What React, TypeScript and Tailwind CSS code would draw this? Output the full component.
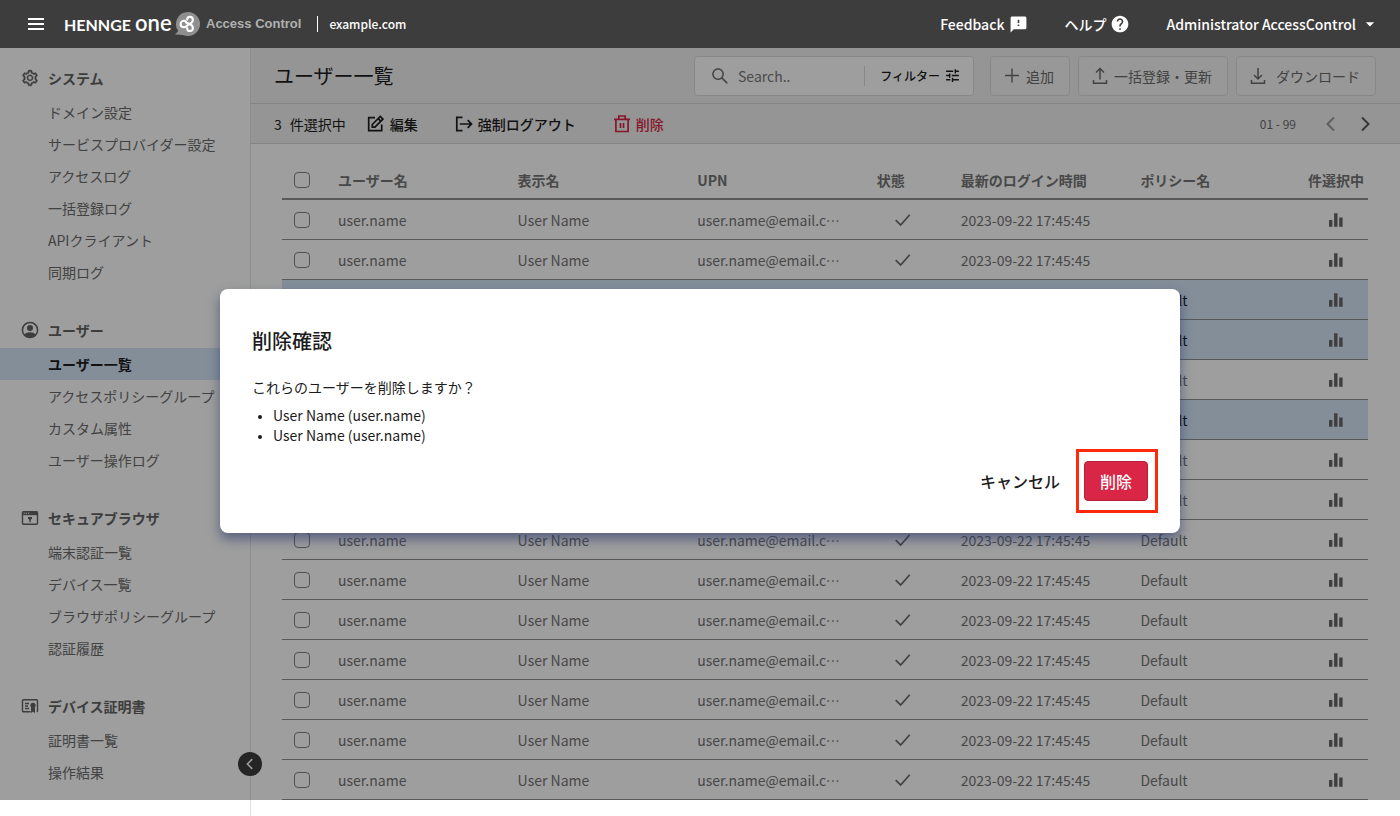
import type { ReactNode } from "react";
import { AiOutlineSearch, AiOutlineSetting } from "react-icons/ai";
import { MdArrowDropDown, MdFeedback, MdHelp, MdTune } from "react-icons/md";

interface NavSection {
  title: string;
  icon: ReactNode;
  items: string[];
}

interface UserRow {
  policy: string;
  selected: boolean;
}

function UserIcon() {
  return (
    <svg viewBox="0 0 18 18" className="h-[18px] w-[18px]" fill="none">
      <circle cx="9" cy="9" r="7.6" stroke="currentColor" strokeWidth="1.5" />
      <circle cx="9" cy="7" r="3" fill="currentColor" />
      <path d="M3.4 13.6c1.2-1.6 3.3-2.4 5.6-2.4s4.4.8 5.6 2.4C13.3 15.4 11.3 16.4 9 16.4s-4.3-1-5.6-2.800z" fill="currentColor" />
    </svg>
  );
}

function BrowserIcon() {
  return (
    <svg viewBox="0 0 18 18" className="h-[18px] w-[18px]" fill="none">
      <rect x="1.5" y="2.7" width="15" height="12.6" rx="1" stroke="currentColor" strokeWidth="1.4" />
      <path d="M1.5 2.700h15v3.500h-15z" fill="currentColor" />
      <path d="M2.600 4.300h1.200M4.800 4.300h1.200M7 4.300h1.200" stroke="#fff" strokeWidth="1.1" />
      <path d="M7 8h4v1.700l-1.300 1v2.600H8.300v-2.600L7 9.700z" fill="currentColor" />
    </svg>
  );
}

function CertificateIcon() {
  return (
    <svg viewBox="0 0 18 18" className="h-[18px] w-[18px]" fill="none">
      <path d="M9.500 14.800h-7a1 1 0 0 1-1-1V3.700a1 1 0 0 1 1-1h13a1 1 0 0 1 1 1v10.100a1 1 0 0 1-.7 1" stroke="currentColor" strokeWidth="1.4" />
      <path d="M4 6.500h4M4 9h3M4 11.500h4" stroke="currentColor" strokeWidth="1.3" />
      <circle cx="12" cy="8.3" r="2.6" fill="currentColor" />
      <path d="M10 10.300h4v5.700l-2-1.300-2 1.300z" fill="currentColor" />
    </svg>
  );
}

function ChartIcon() {
  return (
    <svg viewBox="0 0 16 16" className="mx-auto h-4 w-4" fill="currentColor">
      <path d="M1 8h3.400v6.800H1zM6.100 1.200h3.400v13.600H6.100zM11.200 5.400h3.400v9.400h-3.400z" />
    </svg>
  );
}

function CheckIcon() {
  return (
    <svg viewBox="0 0 16 16" className="mx-auto h-4 w-4" fill="none" stroke="currentColor" strokeWidth="1.7">
      <path d="M.7 8.200 5.700 13 14.700 2.800" />
    </svg>
  );
}

function PlusIcon() {
  return (
    <svg viewBox="0 0 18 18" className="h-[18px] w-[18px]" fill="none" stroke="currentColor" strokeWidth="1.4">
      <path d="M1 8.500h14M8 1.500v14" />
    </svg>
  );
}

function UploadIcon() {
  return (
    <svg viewBox="0 0 18 18" className="h-[18px] w-[18px]" fill="none" stroke="currentColor" strokeWidth="1.5">
      <path d="M8 12.500V1.800M4 5.500l4-4 4 4M1.500 13v3.300h13V13" />
    </svg>
  );
}

function DownloadIcon() {
  return (
    <svg viewBox="0 0 18 18" className="h-[18px] w-[18px]" fill="none" stroke="currentColor" strokeWidth="1.5">
      <path d="M8 1v10.800M4 8l4 4 4-4M1.500 13v3.300h13V13" />
    </svg>
  );
}

function EditIcon() {
  return (
    <svg viewBox="0 0 18 18" className="h-[18px] w-[18px]" fill="none" stroke="currentColor" strokeWidth="1.7">
      <path d="M9 2.700H2.700v13h13V9.500" />
      <path d="M6.300 12.200V9.500L14.300 1.500 16.900 4.100 8.900 12.200zM12.200 3.700l2.500 2.500" />
    </svg>
  );
}

function LogoutIcon() {
  return (
    <svg viewBox="0 0 20 18" className="h-[18px] w-5" fill="none" stroke="currentColor" strokeWidth="1.7">
      <path d="M8.500 2.300H2.800v13.400h5.700" />
      <path d="M5.800 9h11.700M13.700 5.200 17.500 9l-3.800 3.800" />
    </svg>
  );
}

function TrashIcon() {
  return (
    <svg viewBox="0 0 20 20" className="h-5 w-5" fill="none" stroke="currentColor" strokeWidth="1.7">
      <path d="M2 5.300h16M6.800 5.300V2h6.400v3.300M3.900 5.300v12.200h12.200V5.300M8.500 9v5M11.500 9v5" />
    </svg>
  );
}

function ServiceLogo() {
  return (
    <svg viewBox="0 0 25 24" className="h-6 w-[25px]" fill="none">
      <path d="M13 0a12 12 0 1 1-5 22.900L0 22.500l3.200-3.600A12 12 0 0 1 13 0z" fill="#8f8f8f" />
      <path
        d="M10.200 8.900C7.200 8.300 5.600 10 5.600 12s1.500 3.300 3.500 3.300c2.600 0 3.200-2.300 5.400-3.400M10.200 8.900c.6 1.700 2 2.700 4.300 3M12.200 7.600c0-1.800 1.200-2.700 2.700-2.700s3 1 3 2.800-1.300 3.400-3.400 4.200c2.200.7 3.400 2.100 3.400 4.100s-1.300 3-3 3-2.700-1-2.700-2.600"
        stroke="#fff"
        strokeWidth="2.1"
        strokeLinecap="round"
        strokeLinejoin="round"
      />
    </svg>
  );
}

function Chevron({ flip, className }: { flip?: boolean; className: string }) {
  return (
    <svg viewBox="0 0 16 16" className={className} fill="none" stroke="currentColor">
      <path d={flip ? "M5 1.500 11.500 8 5 14.500" : "M11 1.500 4.500 8 11 14.500"} strokeWidth="2" />
    </svg>
  );
}

const sections: NavSection[] = [
  {
    title: "システム",
    icon: <AiOutlineSetting size={18} strokeWidth={28} />,
    items: ["ドメイン設定", "サービスプロバイダー設定", "アクセスログ", "一括登録ログ", "APIクライアント", "同期ログ"],
  },
  {
    title: "ユーザー",
    icon: <UserIcon />,
    items: ["ユーザー一覧", "アクセスポリシーグループ", "カスタム属性", "ユーザー操作ログ"],
  },
  {
    title: "セキュアブラウザ",
    icon: <BrowserIcon />,
    items: ["端末認証一覧", "デバイス一覧", "ブラウザポリシーグループ", "認証履歴"],
  },
  {
    title: "デバイス証明書",
    icon: <CertificateIcon />,
    items: ["証明書一覧", "操作結果"],
  },
];

const selectedRows = [2, 3, 5];

const rows: UserRow[] = Array.from({ length: 15 }, (_, i) => ({
  policy: i < 2 ? "" : "Default",
  selected: selectedRows.includes(i),
}));

function Header() {
  return (
    <header className="flex h-12 items-center justify-between bg-[#3d3d3d] pl-7 pr-5 text-white">
      <div className="flex items-center">
        <button aria-label="メニュー" className="flex w-4 flex-col gap-[3px]">
          <span className="h-[2px] bg-white"></span>
          <span className="h-[2px] bg-white"></span>
          <span className="h-[2px] bg-white"></span>
        </button>
        <a href="#" className="ml-5 flex items-center">
          <span className="flex w-[111px] items-baseline gap-1 font-[Lato] leading-6">
            <span className="text-base font-bold">HENNGE</span>
            <span className="text-[22px] font-semibold">one</span>
          </span>
          <ServiceLogo />
          <span className="ml-[6px] font-['Liberation_Sans',sans-serif] text-[13px] font-bold text-[#b0b0b0]">
            Access Control
          </span>
        </a>
        <span className="ml-4 h-4 w-px bg-white"></span>
        <span className="ml-[11px] text-xs font-medium">example.com</span>
      </div>
      <nav className="flex items-center text-sm font-medium">
        <a href="#" className="flex items-center gap-[5px]">
          Feedback
          <MdFeedback size={19} />
        </a>
        <a href="#" className="ml-9 flex items-center gap-1">
          ヘルプ
          <MdHelp size={20} />
        </a>
        <button className="ml-9 flex items-center gap-1">
          Administrator AccessControl
          <MdArrowDropDown size={20} />
        </button>
      </nav>
    </header>
  );
}

function Sidebar() {
  return (
    <aside className="relative w-[250px] shrink-0 bg-white pt-3 text-sm text-[#6b6b6b]">
      {sections.map((section) => (
        <section key={section.title} className="mb-6">
          <h2 className="flex h-9 items-center gap-[9px] pl-[21px] font-bold text-[#636363]">
            {section.icon}
            {section.title}
          </h2>
          <ul>
            {section.items.map((item) => (
              <li key={item}>
                <a
                  href="#"
                  className={
                    item === "ユーザー一覧"
                      ? "flex h-8 items-center bg-[#d4e5f7] pl-12 font-bold text-[#1c1c1c]"
                      : "flex h-8 items-center pl-12"
                  }
                >
                  {item}
                </a>
              </li>
            ))}
          </ul>
        </section>
      ))}
      <button
        aria-label="サイドバーを閉じる"
        className="absolute -right-3 bottom-10 flex h-6 w-6 items-center justify-center rounded-full bg-[#3d3d3d] text-white"
      >
        <Chevron className="h-3 w-3" />
      </button>
    </aside>
  );
}

function Toolbar() {
  const button = "flex h-10 items-center rounded border border-[#dcdcdc] bg-[#f5f5f5] pl-[13px] pr-[15px] text-[#6b6b6b]";
  return (
    <div className="flex h-14 items-center border-b border-[#d6d6d6] bg-[#f0f0f0] pl-[23px] pr-6 text-sm">
      <h1 className="flex-1 text-xl text-[#1c1c1c]">ユーザー一覧</h1>
      <div className="mr-4 flex h-10 w-[280px] items-center rounded border border-[#dcdcdc] bg-white pl-[15px] pr-3">
        <AiOutlineSearch size={20} className="text-[#6b6b6b]" />
        <input
          type="text"
          aria-label="検索"
          placeholder="Search.."
          className="ml-2 min-w-0 flex-1 outline-none placeholder:text-[#7a7a7a]"
        />
        <button className="flex h-5 items-center gap-1 border-l border-[#dcdcdc] pl-[15px] text-xs font-medium text-[#1c1c1c]">
          フィルター
          <MdTune size={17} />
        </button>
      </div>
      <div className="flex gap-2">
        <button className={`${button} gap-1`}>
          <PlusIcon />
          追加
        </button>
        <button className={`${button} gap-1`}>
          <UploadIcon />
          一括登録・更新
        </button>
        <button className={`${button} gap-2`}>
          <DownloadIcon />
          ダウンロード
        </button>
      </div>
    </div>
  );
}

function SelectionBar() {
  return (
    <div className="flex h-10 items-center border-b border-[#d6d6d6] bg-[#f0f0f0] pl-[23px] pr-[27px] text-sm text-[#1c1c1c]">
      <span>3</span>
      <span className="ml-2">件選択中</span>
      <button className="ml-5 flex items-center gap-[6px] font-medium">
        <EditIcon />
        編集
      </button>
      <button className="ml-9 flex items-center gap-1 font-medium">
        <LogoutIcon />
        強制ログアウト
      </button>
      <button className="ml-9 flex items-center gap-1 font-medium text-[#d92546]">
        <TrashIcon />
        削除
      </button>
      <span className="ml-auto text-xs text-[#6b6b6b]">01 - 99</span>
      <button aria-label="前へ" className="ml-[27px] text-[#9a9a9a]">
        <Chevron className="h-4 w-4" />
      </button>
      <button aria-label="次へ" className="ml-[18px] text-[#5b5b5b]">
        <Chevron flip className="h-4 w-4" />
      </button>
    </div>
  );
}

function Checkbox({ label, checked }: { label: string; checked?: boolean }) {
  return (
    <input
      type="checkbox"
      aria-label={label}
      defaultChecked={checked}
      className="mx-auto block h-4 w-4 appearance-none rounded border border-[#848484] bg-white checked:bg-[#3d3d3d]"
    />
  );
}

function UserTable() {
  return (
    <div className="pl-[31px] pr-8 pt-4">
      <table className="w-full table-fixed border-separate border-spacing-0 text-left text-sm text-[#757575]">
        <colgroup>
          <col className="w-10" />
          <col />
          <col />
          <col />
          <col className="w-[84px]" />
          <col />
          <col />
          <col className="w-16" />
        </colgroup>
        <thead>
          <tr className="*:h-10 *:border-b-2 *:border-[#8f8f8f] *:pt-[2px] *:font-bold">
            <th>
              <Checkbox label="すべて選択" />
            </th>
            <th className="px-4">ユーザー名</th>
            <th className="px-4">表示名</th>
            <th className="px-4">UPN</th>
            <th className="px-4">状態</th>
            <th className="px-4">最新のログイン時間</th>
            <th className="px-4">ポリシー名</th>
            <th className="px-1">件選択中</th>
          </tr>
        </thead>
        <tbody>
          {rows.map((row, i) => (
            <tr
              key={i}
              className={
                row.selected
                  ? "bg-[#d4e5f7] text-[#1c1c1c] *:h-10 *:border-b *:border-[#8f8f8f]"
                  : "*:h-10 *:border-b *:border-[#8f8f8f]"
              }
            >
              <td>
                <Checkbox label="ユーザーを選択" checked={row.selected} />
              </td>
              <td className="px-4">user.name</td>
              <td className="px-4">User Name</td>
              <td className="truncate px-4">user.name@email.com</td>
              <td className="text-[#6b6b6b]">
                <CheckIcon />
              </td>
              <td className="px-4">2023-09-22 17:45:45</td>
              <td className="px-4">{row.policy}</td>
              <td className="text-[#666666]">
                <ChartIcon />
              </td>
            </tr>
          ))}
        </tbody>
      </table>
    </div>
  );
}

function DeleteDialog() {
  return (
    <div className="absolute inset-x-0 bottom-4 top-0 flex items-center justify-center bg-black/38 pb-[26px]">
      <div
        role="dialog"
        aria-labelledby="dialog-title"
        className="w-full max-w-[960px] rounded-lg bg-white p-8 text-sm leading-5 text-[#1c1c1c] shadow-[0_6px_12px_rgba(40,55,105,0.6)]"
      >
        <h2 id="dialog-title" className="text-xl leading-10 font-medium">
          削除確認
        </h2>
        <p className="mt-4">これらのユーザーを削除しますか？</p>
        <ul className="mt-2 list-disc pl-[21px] marker:text-[10px]">
          <li>User Name (user.name)</li>
          <li>User Name (user.name)</li>
        </ul>
        <div className="mt-4 flex justify-end gap-6 text-base font-medium">
          <button>キャンセル</button>
          <div className="relative">
            <button className="h-10 rounded border border-[#b51f3b] bg-[#d92546] px-[15px] text-white">削除</button>
            <span className="pointer-events-none absolute -bottom-3 -left-2 -right-[10px] -top-3 border-3 border-[#ff2a0c]"></span>
          </div>
        </div>
      </div>
    </div>
  );
}

export default function App() {
  return (
    <div className="flex min-h-screen flex-col bg-white font-['Noto_Sans_CJK_JP',sans-serif]">
      <Header />
      <div className="relative flex flex-1">
        <Sidebar />
        <main className="min-w-0 flex-1 border-l border-[#e2e2e2]">
          <Toolbar />
          <SelectionBar />
          <UserTable />
        </main>
        <DeleteDialog />
      </div>
    </div>
  );
}
